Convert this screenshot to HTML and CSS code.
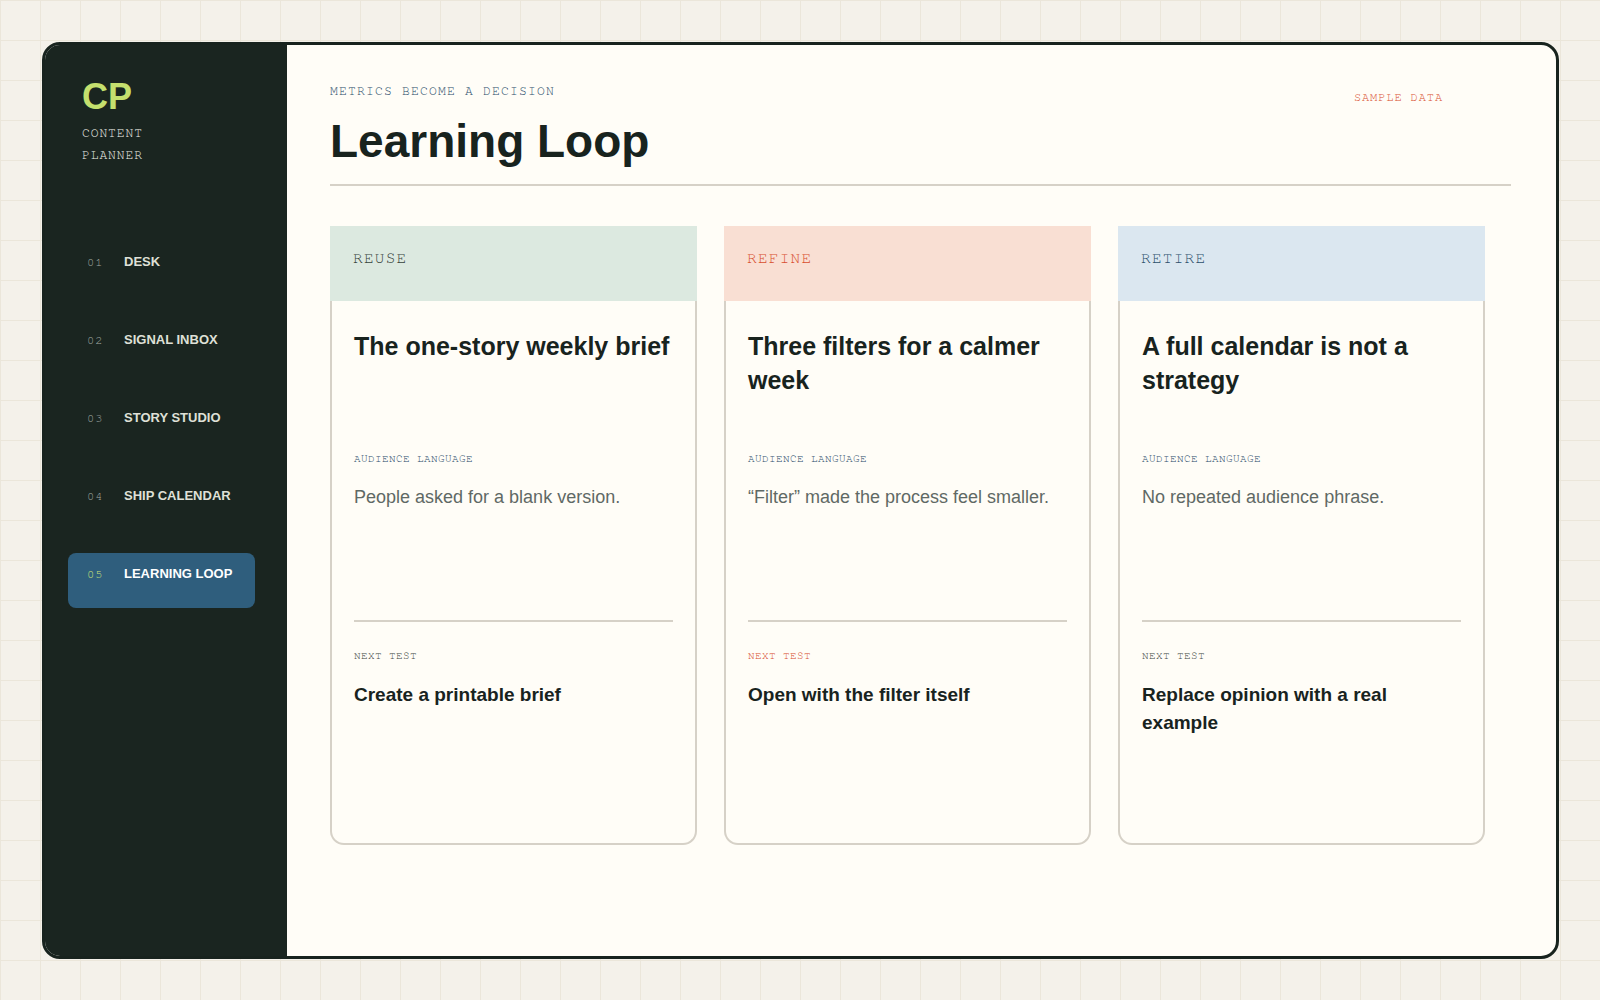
FILE: index.html
```html
<!DOCTYPE html>
<html lang="en">
<head>
<meta charset="utf-8">
<title>Learning Loop</title>
<link rel="stylesheet" href="styles.css">
</head>
<body>
<div class="frame">
  <aside class="sidebar">
    <div class="brand">
      <div class="logo">CP</div>
      <div class="brand-sub">CONTENT PLANNER</div>
    </div>
    <nav class="nav">
      <a class="nav-item"><span class="num">01</span><span class="lbl">DESK</span></a>
      <a class="nav-item"><span class="num">02</span><span class="lbl">SIGNAL INBOX</span></a>
      <a class="nav-item"><span class="num">03</span><span class="lbl">STORY STUDIO</span></a>
      <a class="nav-item"><span class="num">04</span><span class="lbl">SHIP CALENDAR</span></a>
      <a class="nav-item active"><span class="num">05</span><span class="lbl">LEARNING LOOP</span></a>
    </nav>
  </aside>
  <main class="main">
    <header class="head">
      <div class="head-text">
        <div class="eyebrow">METRICS BECOME A DECISION</div>
        <h1>Learning Loop</h1>
      </div>
      <div class="badge">SAMPLE DATA</div>
    </header>
    <section class="cards">
      <article class="card reuse">
        <div class="card-head">REUSE</div>
        <div class="card-body">
          <h2>The one-story weekly brief</h2>
          <div class="quote">
            <div class="label">AUDIENCE LANGUAGE</div>
            <p>People asked for a blank version.</p>
          </div>
          <div class="next">
            <div class="label next-label">NEXT TEST</div>
            <p>Create a printable brief</p>
          </div>
        </div>
      </article>
      <article class="card refine">
        <div class="card-head">REFINE</div>
        <div class="card-body">
          <h2>Three filters for a calmer week</h2>
          <div class="quote">
            <div class="label">AUDIENCE LANGUAGE</div>
            <p>“Filter” made the process feel smaller.</p>
          </div>
          <div class="next">
            <div class="label next-label">NEXT TEST</div>
            <p>Open with the filter itself</p>
          </div>
        </div>
      </article>
      <article class="card retire">
        <div class="card-head">RETIRE</div>
        <div class="card-body">
          <h2>A full calendar is not a strategy</h2>
          <div class="quote">
            <div class="label">AUDIENCE LANGUAGE</div>
            <p>No repeated audience phrase.</p>
          </div>
          <div class="next">
            <div class="label next-label">NEXT TEST</div>
            <p>Replace opinion with a real example</p>
          </div>
        </div>
      </article>
    </section>
  </main>
</div>
</body>
</html>
```

FILE: styles.css
```css
* { box-sizing: border-box; }

html, body {
  margin: 0;
  padding: 0;
}

body {
  width: 1600px;
  height: 1000px;
  overflow: hidden;
  background-color: #f4f1ea;
  background-image:
    linear-gradient(to right, #ebe6da 1px, transparent 1px),
    linear-gradient(to bottom, #ebe6da 1px, transparent 1px);
  background-size: 40px 40px;
  font-family: "Liberation Sans", Arial, sans-serif;
  color: #18231e;
}

.brand-sub,
.nav-item .num,
.eyebrow,
.badge,
.card-head,
.label {
  font-family: "Nimbus Mono PS", "Nimbus Mono L", "FreeMono", Courier, "Liberation Mono", monospace;
}

.frame {
  margin: 42px 0 0 42px;
  width: 1517px;
  height: 917px;
  border: 3px solid #18231e;
  border-radius: 18px;
  overflow: hidden;
  display: flex;
  background: #fffdf7;
}

/* Sidebar */
.sidebar {
  width: 242px;
  flex: 0 0 242px;
  background: #1a2520;
  padding: 34px 32px 0 23px;
}

.brand {
  padding-left: 14px;
}

.logo {
  font-weight: 700;
  font-size: 36px;
  line-height: 36px;
  color: #c5e06e;
}

.brand-sub {
  margin-top: 7.5px;
  width: 90px;
  font-size: 13px;
  line-height: 22px;
  letter-spacing: 0.9px;
  color: #f2f3ec;
}

.nav {
  margin-top: 74px;
  display: flex;
  flex-direction: column;
  gap: 23px;
}

.nav-item {
  display: flex;
  align-items: center;
  height: 55px;
  padding: 0 24px 12px 19px;
  border-radius: 8px;
  color: #dfe0d7;
  text-decoration: none;
}

.nav-item .num {
  width: 37px;
  flex: 0 0 37px;
  font-size: 12px;
  line-height: 18px;
  letter-spacing: 1px;
  color: #a3aaa5;
}

.nav-item .lbl {
  font-weight: 700;
  font-size: 13px;
  line-height: 18px;
  white-space: nowrap;
}

.nav-item.active {
  background: #2f5e7d;
}

.nav-item.active .num {
  color: #cde37a;
}

.nav-item.active .lbl {
  color: #ffffff;
}

/* Main */
.main {
  flex: 1;
  padding: 38.5px 45px 0 43px;
}

.head {
  display: flex;
  justify-content: space-between;
  align-items: flex-start;
  padding-bottom: 18px;
  border-bottom: 2px solid #d6d1c7;
}

.eyebrow {
  font-size: 13px;
  line-height: 16px;
  letter-spacing: 1.2px;
  color: #1f4b69;
}

h1 {
  margin: 16.3px 0 0;
  font-size: 46px;
  line-height: 50.6px;
  font-weight: 700;
  color: #18231e;
}

.badge {
  margin-top: 5px;
  margin-right: 68px;
  font-size: 12px;
  line-height: 16px;
  letter-spacing: 0.9px;
  color: #d84e2e;
}

.cards {
  margin-top: 40px;
  display: grid;
  grid-template-columns: repeat(3, 367px);
  gap: 27px;
}

.card {
  height: 619px;
  display: flex;
  flex-direction: column;
}

.card-head {
  height: 75px;
  padding: 21.5px 23px;
  font-size: 16px;
  line-height: 20px;
  letter-spacing: 1.28px;
}

.reuse .card-head { background: #dce9e0; color: #35423b; }
.refine .card-head { background: #f9dfd3; color: #d84e2e; }
.retire .card-head { background: #dbe7f0; color: #2a4f6b; }

.card-body {
  flex: 1;
  display: flex;
  flex-direction: column;
  border: 2px solid #d6d1c7;
  border-top: none;
  border-radius: 0 0 14px 14px;
  padding: 29px 22px 0;
}

h2 {
  margin: 0 0 54.4px;
  min-height: 67.5px;
  font-size: 25px;
  line-height: 33.75px;
  font-weight: 700;
  color: #18231e;
}

.label {
  font-size: 11px;
  line-height: 14px;
  letter-spacing: 0.4px;
  color: #1f4b69;
}

.quote {
  flex: 1;
}

.quote p {
  margin: 18px 0 0;
  font-size: 18px;
  line-height: 27px;
  color: #5f6965;
}

.next {
  height: 223px;
  border-top: 2px solid #d6d1c7;
  padding-top: 27px;
}

.next-label { color: #3e4843; }
.refine .next-label { color: #d84e2e; }

.next p {
  margin: 18px 0 0;
  font-size: 19px;
  line-height: 27.5px;
  font-weight: 700;
  color: #18231e;
}
```
